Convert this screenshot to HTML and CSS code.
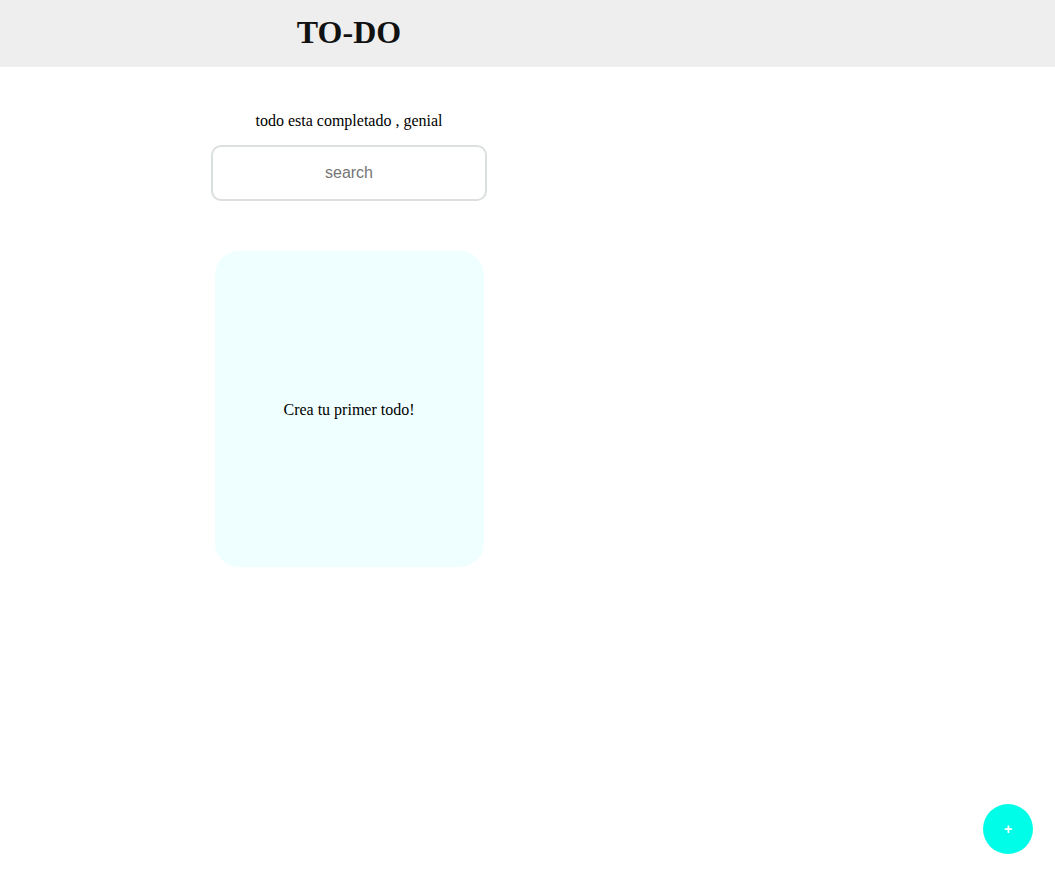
FILE: index.html
```html
<!DOCTYPE html>
<html lang="es">
<head>
<meta charset="utf-8">
<title>TO-DO</title>
<link rel="stylesheet" href="styles.css">
</head>
<body>
<header class="topbar">
  <div class="topbar-inner">
    <h1 class="title">TO-DO</h1>
  </div>
</header>
<main class="main">
  <section class="column">
    <p class="status">todo esta completado , genial</p>
    <input class="search" type="text" placeholder="search">
    <div class="card">
      <p class="card-text">Crea tu primer todo!</p>
    </div>
  </section>
</main>
<button class="fab" type="button">+</button>
</body>
</html>
```

FILE: styles.css
```css
html, body {
  margin: 0;
  padding: 0;
  background: #ffffff;
  font-family: "Liberation Serif", "Times New Roman", serif;
  font-size: 16px;
  color: #000;
}

.topbar {
  background: #edeeed;
  height: 67px;
}

.topbar-inner {
  width: 698px;
  height: 67px;
  display: flex;
  align-items: center;
  justify-content: center;
}

.title {
  margin: 0;
  font-size: 32px;
  font-weight: bold;
  color: #111;
  line-height: 1;
  padding-bottom: 3px;
}

.main {
  display: flex;
}

.column {
  width: 698px;
  display: flex;
  flex-direction: column;
  align-items: center;
  padding-top: 45px;
}

.status {
  margin: 0;
  line-height: 18px;
  height: 17px;
}

.search {
  box-sizing: border-box;
  width: 276px;
  height: 56px;
  margin-top: 16px;
  border: 2px solid #dcdfdf;
  border-radius: 10px;
  font-family: "Liberation Sans", Arial, sans-serif;
  font-size: 16px;
  text-align: center;
  outline: none;
  background: #fff;
}

.search::placeholder {
  color: #757575;
}

.card {
  box-sizing: border-box;
  width: 269px;
  height: 316px;
  margin-top: 50px;
  background: #efffff;
  border-radius: 24px;
  display: flex;
  align-items: center;
  justify-content: center;
}

.card-text {
  margin: 0;
  padding-top: 2px;
}

.fab {
  position: fixed;
  right: 22px;
  bottom: 31px;
  width: 50px;
  height: 50px;
  border-radius: 50%;
  border: none;
  background: #00fde8;
  color: #fff;
  font-family: "Liberation Sans", Arial, sans-serif;
  font-size: 14px;
  font-weight: bold;
  padding: 0;
  display: flex;
  align-items: center;
  justify-content: center;
}
```
